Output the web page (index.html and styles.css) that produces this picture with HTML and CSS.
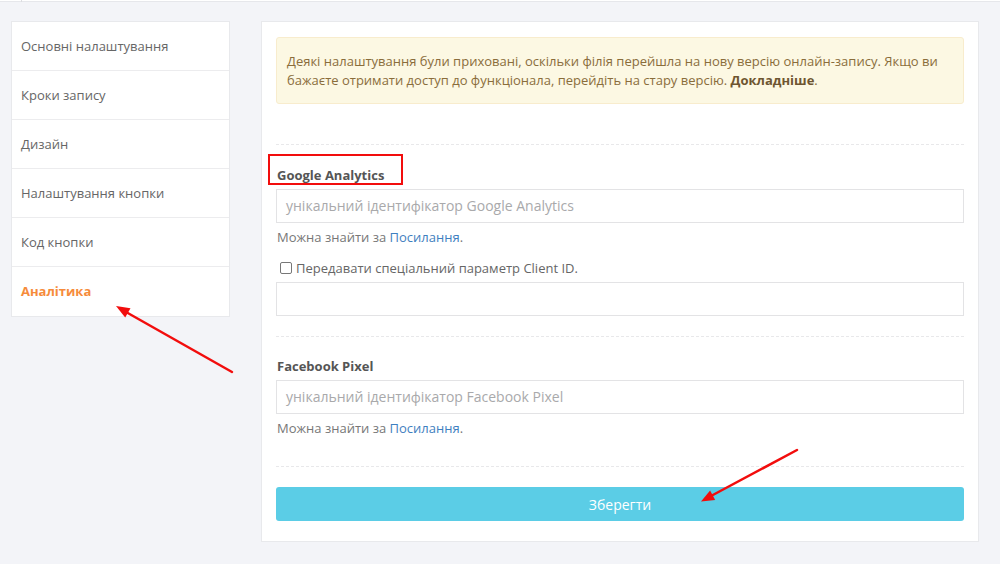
FILE: index.html
```html
<!DOCTYPE html>
<html lang="uk">
<head>
<meta charset="utf-8">
<title>Аналітика</title>
<link rel="stylesheet" href="styles.css">
</head>
<body>
<div class="topbar"><span class="tick"></span></div>
<div class="layout">
  <nav class="sidebar">
    <a class="nav-item">Основні налаштування</a>
    <a class="nav-item">Кроки запису</a>
    <a class="nav-item">Дизайн</a>
    <a class="nav-item">Налаштування кнопки</a>
    <a class="nav-item">Код кнопки</a>
    <a class="nav-item active">Аналітика</a>
  </nav>
  <main class="panel">
    <div class="alert">Деякі налаштування були приховані, оскільки філія перейшла на нову версію онлайн-запису. Якщо ви бажаєте отримати доступ до функціонала, перейдіть на стару версію. <b>Докладніше</b>.</div>
    <hr class="sep sep-first">
    <section class="group">
      <label class="label">Google Analytics</label>
      <div class="input placeholder">унікальний ідентифікатор Google Analytics</div>
      <p class="help">Можна знайти за <a class="link">Посилання</a>.</p>
      <div class="check-row"><span class="checkbox"></span><span>Передавати спеціальний параметр Client ID.</span></div>
      <div class="input"></div>
    </section>
    <hr class="sep">
    <section class="group group-fb">
      <label class="label">Facebook Pixel</label>
      <div class="input placeholder">унікальний ідентифікатор Facebook Pixel</div>
      <p class="help">Можна знайти за <a class="link">Посилання</a>.</p>
    </section>
    <hr class="sep">
    <button class="save">Зберегти</button>
  </main>
</div>
<svg class="annot" width="1000" height="564" viewBox="0 0 1000 564">
  <rect x="269" y="155" width="133" height="29" fill="none" stroke="#f20d0d" stroke-width="2"/>
  <line x1="232" y1="372" x2="126" y2="312" stroke="#f20d0d" stroke-width="2.5" stroke-linecap="round"/>
  <polygon points="116,306 130.5,308.2 125.2,317.6" fill="#f20d0d"/>
  <line x1="797" y1="450" x2="711" y2="496" stroke="#f20d0d" stroke-width="2.5" stroke-linecap="round"/>
  <polygon points="701,501.5 715.2,500 710.1,490.6" fill="#f20d0d"/>
</svg>
</body>
</html>
```
FILE: styles.css
```css
* { box-sizing: border-box; }
html, body { margin: 0; padding: 0; }
body {
  background: #f3f4f8;
  font-family: "Open Sans", "Noto Sans", sans-serif;
  font-size: 13px;
  color: #666;
  width: 1000px;
  height: 564px;
  overflow: hidden;
  position: relative;
}
.topbar {
  height: 2px;
  background: #fff;
  border-bottom: 1px solid #e6e7eb;
}
.tick { display: block; width: 1px; height: 2px; background: #dcdde1; margin-left: 21px; }
.layout {
  display: flex;
  align-items: flex-start;
  gap: 31px;
  padding: 19px 0 0 11px;
}
.sidebar {
  width: 219px;
  background: #fff;
  border: 1px solid #e8e9ec;
  display: flex;
  flex-direction: column;
}
.nav-item {
  display: block;
  height: 49px;
  line-height: 48px;
  padding-left: 9px;
  color: #666;
  border-bottom: 1px solid #ececee;
  font-size: 13px;
}
.nav-item:last-child { border-bottom: none; }
.nav-item.active { color: #f68b3b; font-weight: 700; }
.panel {
  width: 718px;
  background: #fff;
  border: 1px solid #e8e9ec;
  padding: 15px 14px 20px 14px;
}
.alert {
  background: #fcf8e3;
  border: 1px solid #f8eccd;
  border-radius: 3px;
  color: #8a6d3b;
  font-size: 13px;
  line-height: 19px;
  padding: 14px 10px;
  height: 67px;
}
.alert b { font-weight: 700; color: #6e5530; }
.sep {
  border: none;
  border-top: 1px dashed #e8e8ea;
  margin: 0;
  height: 0;
}
.sep-first { margin-top: 40px; }
.group { padding: 21px 0 20px; }
.group-fb { padding: 20px 0 29px; }
.label {
  display: block;
  font-weight: 700;
  color: #555;
  font-size: 13px;
  line-height: 18px;
  margin: 0 0 5px 1px;
}
.input {
  height: 34px;
  border: 1px solid #e3e3e5;
  padding: 0 9px;
  font-size: 14px;
  line-height: 32px;
  color: #555;
}
.placeholder { color: #a9a9ab; }
.help {
  margin: 5px 0 0 1px;
  font-size: 13px;
  line-height: 18px;
  color: #777;
}
.link { color: #3f7fc0; }
.check-row {
  display: flex;
  align-items: center;
  gap: 4px;
  margin: 13px 0 5px 4px;
  font-size: 13px;
  line-height: 18px;
  color: #666;
}
.checkbox {
  width: 12px;
  height: 12px;
  border: 1px solid #777;
  border-radius: 2px;
  background: #fff;
}
.save {
  display: block;
  width: 100%;
  height: 34px;
  margin-top: 20px;
  border: none;
  border-radius: 3px;
  background: #5bcde6;
  color: #fff;
  font-family: "Open Sans", "Noto Sans", sans-serif;
  font-size: 14px;
}
.annot { position: absolute; left: 0; top: 0; pointer-events: none; }
```
